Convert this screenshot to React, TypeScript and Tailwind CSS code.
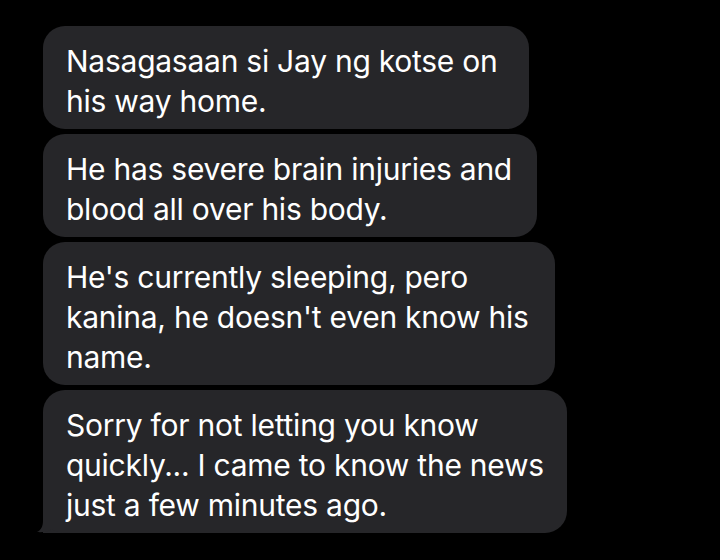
import React from "react";

const msgs: { w: string; lines: string[]; tail?: boolean }[] = [
  { w: "w-[486px]", lines: ["Nasagasaan si Jay ng kotse on", "his way home."] },
  { w: "w-[494px]", lines: ["He has severe brain injuries and", "blood all over his body."] },
  { w: "w-[512px]", lines: ["He's currently sleeping, pero", "kanina, he doesn't even know his", "name."] },
  {
    w: "w-[524px]",
    lines: ["Sorry for not letting you know", "quickly... I came to know the news", "just a few minutes ago."],
    tail: true,
  },
];

export default function App() {
  return (
    <div
      className="w-[720px] h-[560px] bg-black overflow-hidden pt-[26px] pl-[43px] flex flex-col gap-[5px]"
      style={{ fontFamily: "Inter, 'Noto Sans', sans-serif" }}
    >
      {msgs.map((m, i) => (
        <div
          key={i}
          className={`relative ${m.w} bg-[#262629] rounded-[22px] ${m.tail ? "rounded-bl-none" : ""} pl-[23px] pt-[15px] pb-[8px] text-white text-[30px] leading-[40px] whitespace-nowrap tracking-[-0.25px]`}
        >
          {m.tail && (
            <svg
              className="absolute left-[-8px] bottom-0"
              width="40"
              height="24"
              viewBox="0 0 40 24"
            >
              <path
                d="M8 0 L8 12 C8 17 6 21 2 23 C8 23.5 12 22.5 17 20.5 C22 23 28 24 40 24 L40 0 Z"
                fill="#262629"
              />
            </svg>
          )}
          <div className="relative">
            {m.lines.map((l, j) => (
              <div key={j}>{l}</div>
            ))}
          </div>
        </div>
      ))}
    </div>
  );
}
